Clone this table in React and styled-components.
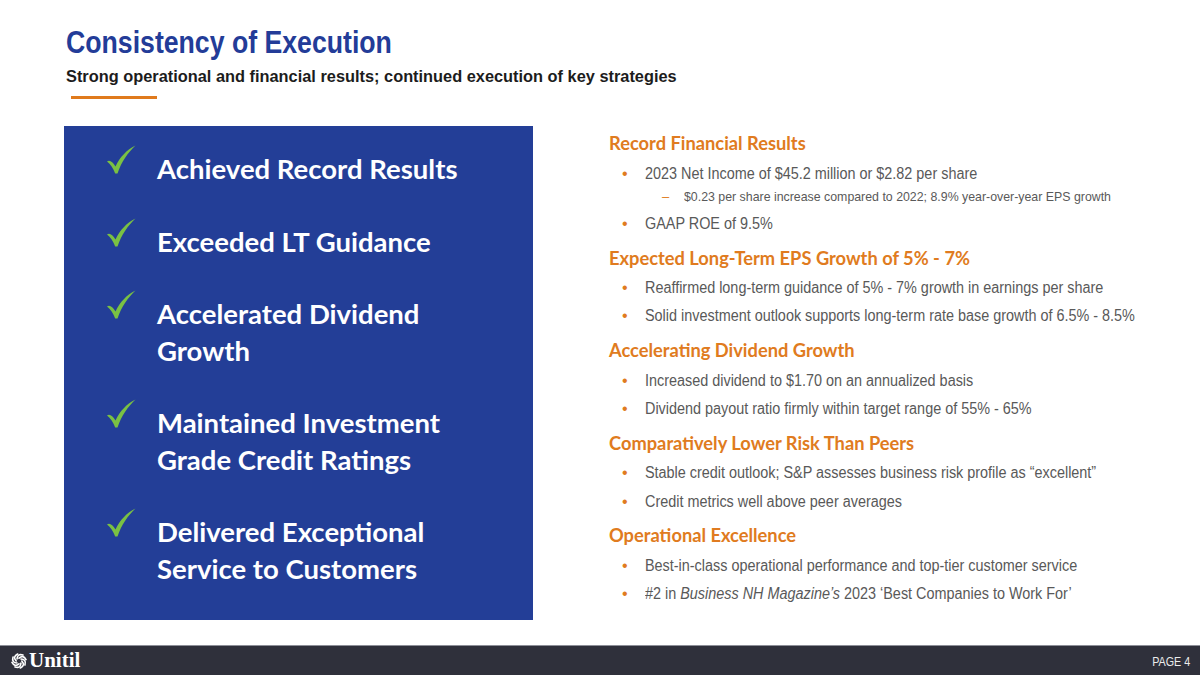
import React from "react";
import styled, { createGlobalStyle } from "styled-components";

const GlobalStyle = createGlobalStyle`
  html, body {
    margin: 0;
    padding: 0;
    background: #ffffff;
  }
  body {
    font-family: "Liberation Sans", Arial, sans-serif;
  }
`;

// no Arial Narrow in the sandbox, so Liberation Sans gets squeezed a little
const NARROW = `"Liberation Sans", Arial, sans-serif`;
const CALIBRI = `Lato, "Open Sans", sans-serif`;

const Page = styled.div`
  width: 1200px;
  height: 675px;
  display: flex;
  flex-direction: column;
  overflow: hidden;
`;

const Header = styled.header`
  padding: 24px 0 0 66px;
`;

const Title = styled.h1`
  margin: 0;
  font-family: ${NARROW};
  font-weight: 700;
  font-size: 31px;
  line-height: 37px;
  color: #233c98;
  white-space: nowrap;
  transform: scaleX(0.86);
  transform-origin: left center;
`;

const Subtitle = styled.h2`
  margin: 6px 0 0;
  font-family: ${NARROW};
  font-weight: 700;
  font-size: 17px;
  line-height: 20px;
  color: #1c1c1c;
  white-space: nowrap;
  transform: scaleX(0.962);
  transform-origin: left center;
`;

const Accent = styled.div`
  width: 86px;
  height: 3px;
  margin: 9px 0 0 5px;
  background: #e07a1c;
`;

const Main = styled.main`
  flex: 1;
  display: flex;
  align-items: flex-start;
  padding: 27px 0 0 64px;
`;

const Panel = styled.section`
  width: 469px;
  height: 494px;
  flex: none;
  box-sizing: border-box;
  background: #233e97;
  padding: 25px 0 0 42px;
  display: flex;
  flex-direction: column;
  gap: 36px;
`;

const Achievement = styled.div`
  display: flex;
  align-items: flex-start;
`;

const Check = styled.svg`
  flex: none;
  width: 30px;
  height: 29px;
  margin-top: -6px;
`;

const AchievementText = styled.div`
  margin-left: 21px;
  font-family: ${CALIBRI};
  font-weight: 700;
  font-size: 27.5px;
  line-height: 36.5px;
  color: #ffffff;
`;

const Details = styled.div`
  margin-left: 76px;
  padding-top: 5px;
  display: flex;
  flex-direction: column;
  gap: 7.5px;
`;

const Group = styled.div`
  display: flex;
  flex-direction: column;
`;

const GroupTitle = styled.h3`
  margin: 0 0 4.5px;
  font-family: ${CALIBRI};
  font-weight: 700;
  font-size: 18.3px;
  line-height: 24px;
  color: #e07b20;
`;

const Bullet = styled.div`
  display: flex;
  padding-left: 13px;
  font-family: ${NARROW};
  font-size: 16px;
  line-height: 28.3px;
  color: #595959;

  &::before {
    content: "•";
    color: #e07b20;
    width: 23px;
    flex: none;
  }
`;

const SubBullet = styled.div`
  display: flex;
  padding-left: 53px;
  margin: -2px 0 2px;
  font-family: ${NARROW};
  font-size: 13px;
  line-height: 22px;
  color: #595959;

  &::before {
    content: "–";
    color: #e07b20;
    width: 22px;
    flex: none;
  }
`;

const Narrow = styled.span`
  display: inline-block;
  white-space: nowrap;
  transform: scaleX(${(p) => p.$scale});
  transform-origin: ${(p) => (p.$right ? "right" : "left")} center;
`;

const Footer = styled.footer`
  height: 30px;
  flex: none;
  box-sizing: border-box;
  border-top: 1px solid #8d8f98;
  background: #2f303b;
  display: flex;
  align-items: center;
  justify-content: space-between;
  padding: 0 10px 0 11px;
`;

const Logo = styled.div`
  display: flex;
  align-items: center;
  gap: 2px;
`;

const LogoMark = styled.svg`
  width: 16px;
  height: 16px;
`;

const LogoWord = styled.span`
  font-family: "Liberation Serif", "Times New Roman", serif;
  font-weight: 700;
  font-size: 21px;
  color: #ffffff;
  line-height: 1;
`;

const PageNumber = styled.span`
  font-family: ${NARROW};
  font-size: 12.5px;
  color: #ececec;
  padding-top: 2px;
`;

const achievements = [
  ["Achieved Record Results"],
  ["Exceeded LT Guidance"],
  ["Accelerated Dividend", "Growth"],
  ["Maintained Investment", "Grade Credit Ratings"],
  ["Delivered Exceptional", "Service to Customers"],
];

const CheckMark = () => (
  <Check viewBox="0 0 30 29">
    <path
      d="M1 16.5 C3.5 14.5 6.5 16.5 9.5 21.5 C14 12 20.5 5 29.5 0.5 C22 7.5 15.5 16.5 11.5 28.5 L9.2 28.5 C7.2 23.5 4.5 19 1 16.5 Z"
      fill="#7ac143"
    />
  </Check>
);

const UnitilMark = () => (
  <LogoMark viewBox="-8 -8 16 16">
    {[0, 45, 90, 135, 180, 225, 270, 315].map((a) => (
      <path
        key={a}
        d="M0 -2.8 Q4.2 -6.6 7 -1.4"
        fill="none"
        stroke="#ffffff"
        strokeWidth="1.6"
        strokeLinecap="round"
        transform={`rotate(${a})`}
      />
    ))}
  </LogoMark>
);

const B = ({ children }) => (
  <Bullet>
    <Narrow $scale={0.9}>{children}</Narrow>
  </Bullet>
);

const App = () => {
  return (
    <Page>
      <GlobalStyle />
      <Header>
        <Title>Consistency of Execution</Title>
        <Subtitle>
          Strong operational and financial results; continued execution of key strategies
        </Subtitle>
        <Accent />
      </Header>

      <Main>
        <Panel>
          {achievements.map((lines) => (
            <Achievement key={lines[0]}>
              <CheckMark />
              <AchievementText>
                {lines.map((l) => (
                  <div key={l}>{l}</div>
                ))}
              </AchievementText>
            </Achievement>
          ))}
        </Panel>

        <Details>
          <Group>
            <GroupTitle>Record Financial Results</GroupTitle>
            <B>2023 Net Income of $45.2 million or $2.82 per share</B>
            <SubBullet>
              <Narrow $scale={0.95}>
                $0.23 per share increase compared to 2022; 8.9% year-over-year EPS growth
              </Narrow>
            </SubBullet>
            <B>GAAP ROE of 9.5%</B>
          </Group>
          <Group>
            <GroupTitle>Expected Long-Term EPS Growth of 5% - 7%</GroupTitle>
            <B>Reaffirmed long-term guidance of 5% - 7% growth in earnings per share</B>
            <B>Solid investment outlook supports long-term rate base growth of 6.5% - 8.5%</B>
          </Group>
          <Group>
            <GroupTitle>Accelerating Dividend Growth</GroupTitle>
            <B>Increased dividend to $1.70 on an annualized basis</B>
            <B>Dividend payout ratio firmly within target range of 55% - 65%</B>
          </Group>
          <Group>
            <GroupTitle>Comparatively Lower Risk Than Peers</GroupTitle>
            <B>Stable credit outlook; S&amp;P assesses business risk profile as “excellent”</B>
            <B>Credit metrics well above peer averages</B>
          </Group>
          <Group>
            <GroupTitle>Operational Excellence</GroupTitle>
            <B>Best-in-class operational performance and top-tier customer service</B>
            <B>
              #2 in <i>Business NH Magazine’s</i> 2023 ‘Best Companies to Work For’
            </B>
          </Group>
        </Details>
      </Main>

      <Footer>
        <Logo>
          <UnitilMark />
          <LogoWord>Unitil</LogoWord>
        </Logo>
        <PageNumber>
          <Narrow $scale={0.86} $right>
            PAGE 4
          </Narrow>
        </PageNumber>
      </Footer>
    </Page>
  );
};

export default App;
